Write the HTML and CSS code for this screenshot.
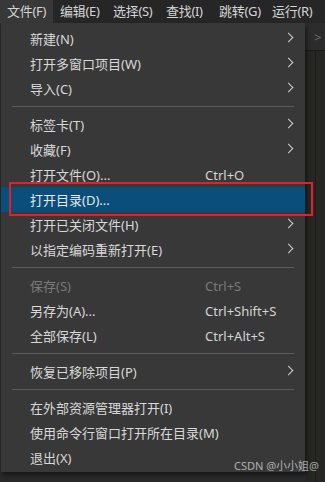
FILE: index.html
```html
<!DOCTYPE html>
<html lang="zh-CN">

<head>
  <meta charset="UTF-8">
  <meta name="viewport" content="width=device-width, initial-scale=1.0">
  <title>文件菜单</title>
  <link rel="stylesheet" href="styles.css">
</head>

<body>
  <div class="menubar">
    <span class="top-item active">文件(F)</span>
    <span class="top-item">编辑(E)</span>
    <span class="top-item">选择(S)</span>
    <span class="top-item">查找(I)</span>
    <span class="top-item">跳转(G)</span>
    <span class="top-item">运行(R)</span>
  </div>
  <div class="workspace">
    <ul class="menu">
      <li class="row"><span class="label">新建(N)</span><i class="arrow"></i></li>
      <li class="row"><span class="label">打开多窗口项目(W)</span><i class="arrow"></i></li>
      <li class="row"><span class="label">导入(C)</span><i class="arrow"></i></li>
      <li class="sep"></li>
      <li class="row"><span class="label">标签卡(T)</span><i class="arrow"></i></li>
      <li class="row"><span class="label">收藏(F)</span><i class="arrow"></i></li>
      <li class="row"><span class="label">打开文件(O)...</span><span class="key">Ctrl+O</span></li>
      <li class="row selected"><span class="label">打开目录(D)...</span><b class="mark"></b></li>
      <li class="row"><span class="label">打开已关闭文件(H)</span><i class="arrow"></i></li>
      <li class="row"><span class="label">以指定编码重新打开(E)</span><i class="arrow"></i></li>
      <li class="sep"></li>
      <li class="row disabled"><span class="label">保存(S)</span><span class="key">Ctrl+S</span></li>
      <li class="row"><span class="label">另存为(A)...</span><span class="key">Ctrl+Shift+S</span></li>
      <li class="row"><span class="label">全部保存(L)</span><span class="key">Ctrl+Alt+S</span></li>
      <li class="sep"></li>
      <li class="row"><span class="label">恢复已移除项目(P)</span><i class="arrow"></i></li>
      <li class="sep"></li>
      <li class="row"><span class="label">在外部资源管理器打开(I)</span></li>
      <li class="row"><span class="label">使用命令行窗口打开所在目录(M)</span></li>
      <li class="row"><span class="label">退出(X)</span></li>
    </ul>
    <div class="side">
      <div class="tabs"><span class="tab-num">5</span><span class="tab-next">&gt;</span></div>
      <div class="pane"></div>
    </div>
  </div>
  <span class="watermark">CSDN @小小姐@</span>
</body>

</html>
```

FILE: styles.css
```css
* {
  padding: 0;
  margin: 0;
  box-sizing: border-box;
}

body {
  width: 325px;
  height: 482px;
  overflow: hidden;
  background: #292929;
  color: #d8d8d8;
  font-family: "Noto Sans", "Noto Sans CJK SC", sans-serif;
  font-size: 13px;
  position: relative;
}

.menubar {
  height: 23px;
  display: flex;
  background: #262626;
  overflow: hidden;
}

.top-item {
  flex: none;
  width: 53px;
  padding-left: 7px;
  line-height: 23px;
  color: #d4d4d4;
  white-space: nowrap;
  letter-spacing: -0.3px;
}

.top-item.active {
  background: #383838;
}

.workspace {
  display: flex;
  align-items: flex-start;
}

.menu {
  list-style: none;
  width: 304px;
  margin-left: 1px;
  padding: 3px 0 2px;
  background: #383838;
  box-shadow: 2px 3px 4px rgba(0, 0, 0, 0.45);
  position: relative;
  z-index: 2;
}

.row {
  height: 25px;
  display: flex;
  align-items: center;
  padding-left: 29px;
  position: relative;
  white-space: nowrap;
}

.label {
  width: 175px;
}

.key {
  color: #d4d4d4;
}

.disabled .label,
.disabled .key {
  color: #7a7a7a;
}

.selected {
  background: #0a4e7c;
  color: #e8e8e8;
}

.mark {
  position: absolute;
  left: 8px;
  right: -8px;
  top: -5px;
  bottom: -4px;
  border: 2px solid #e3202b;
}

.arrow {
  position: absolute;
  left: 284px;
  top: 8px;
  width: 7px;
  height: 7px;
  border-top: 1.5px solid #d0d0d0;
  border-right: 1.5px solid #d0d0d0;
  transform: rotate(45deg);
}

.sep {
  height: 11px;
  display: flex;
  align-items: center;
  margin: 0 11px;
}

.sep::before {
  content: "";
  flex: 1;
  height: 1px;
  background: #5c5c5c;
}

.side {
  flex: 1;
  height: 459px;
  display: flex;
  flex-direction: column;
  background: #262723;
}

.tabs {
  height: 28px;
  display: flex;
  align-items: center;
  background: #2c2c2c;
  border-bottom: 1px solid #1c1c1a;
  margin-left: -8px;
  color: #7a7a7a;
}

.tab-num {
  width: 14px;
}

.tab-next {
  margin-left: 3px;
  color: #6a6a6a;
}

.pane {
  flex: 1;
  margin-left: 10px;
  border-left: 1px solid #1c1c1a;
}

.watermark {
  position: absolute;
  right: 6px;
  bottom: 9px;
  font-size: 11px;
  color: rgba(255, 255, 255, 0.6);
  z-index: 3;
}
```
